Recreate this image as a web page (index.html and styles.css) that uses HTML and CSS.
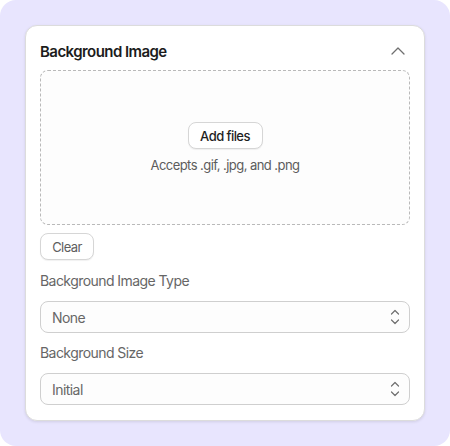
FILE: index.html
```html
<!DOCTYPE html>
<html>
<head>
<meta charset="utf-8">
<link rel="stylesheet" href="styles.css">
</head>
<body>
<div class="frame">
  <section class="card">
    <header class="card-head">
      <h2 class="card-title">Background Image</h2>
      <svg class="collapse" width="14" height="8" viewBox="0 0 14 8" fill="none"><path d="M1 7 L7 1 L13 7" stroke="#6f6f6f" stroke-width="1.3" stroke-linecap="round" stroke-linejoin="round"/></svg>
    </header>
    <div class="dropzone">
      <button class="btn btn-primary">Add files</button>
      <p class="hint">Accepts .gif, .jpg, and .png</p>
    </div>
    <div class="clear-row"><button class="btn btn-clear">Clear</button></div>
    <div class="field">
      <label class="field-label">Background Image Type</label>
      <div class="select">
        <span class="select-value">None</span>
        <svg class="updown" width="10" height="18" viewBox="0 0 10 18" fill="none"><path d="M1.5 6 L5 2.5 L8.5 6 M1.5 12 L5 15.5 L8.5 12" stroke="#6f6f6f" stroke-width="1.2" stroke-linecap="round" stroke-linejoin="round"/></svg>
      </div>
    </div>
    <div class="field">
      <label class="field-label">Background Size</label>
      <div class="select">
        <span class="select-value">Initial</span>
        <svg class="updown" width="10" height="18" viewBox="0 0 10 18" fill="none"><path d="M1.5 6 L5 2.5 L8.5 6 M1.5 12 L5 15.5 L8.5 12" stroke="#6f6f6f" stroke-width="1.2" stroke-linecap="round" stroke-linejoin="round"/></svg>
      </div>
    </div>
  </section>
</div>
</body>
</html>
```
FILE: styles.css
```css
* { box-sizing: border-box; }
html, body { margin: 0; padding: 0; background: #ffffff; }
body { font-family: Inter, "Noto Sans", sans-serif; letter-spacing: -0.035em; }
.frame {
  width: 450px;
  height: 446px;
  background: #e8e5fe;
  border-radius: 16px;
  padding: 25px;
}
.card {
  width: 400px;
  height: 396px;
  background: #ffffff;
  border: 1px solid #dcdcdc;
  border-radius: 12px;
  box-shadow: 0 1px 3px rgba(0,0,0,0.10);
  padding: 14px 14px 15px;
  display: flex;
  flex-direction: column;
}
.card-head {
  display: flex;
  align-items: center;
  justify-content: space-between;
  height: 22px;
  margin-bottom: 8px;
}
.card-title {
  margin: 0;
  font-size: 15px;
  font-weight: 600;
  color: #1c1c1c;
}
.collapse { margin-right: 5px; }
.dropzone {
  height: 155px;
  border: 1px dashed #b9b9b9;
  border-radius: 8px;
  background: #fdfdfd;
  display: flex;
  flex-direction: column;
  align-items: center;
  padding-top: 51px;
}
.btn {
  font-family: inherit;
  letter-spacing: inherit;
  font-size: 13px;
  background: #ffffff;
  border: 1px solid #d6d6d6;
  border-radius: 8px;
  height: 27px;
  box-shadow: 0 1px 1px rgba(0,0,0,0.06);
  cursor: pointer;
}
.btn-primary {
  width: 75px;
  font-weight: 500;
  color: #1f1f1f;
}
.hint {
  margin: 7px 0 0;
  font-size: 13px;
  color: #5c5c5c;
  line-height: 18px;
}
.clear-row { margin-top: 8px; }
.btn-clear {
  width: 54px;
  color: #5e5e5e;
  padding: 0;
}
.field {
  display: flex;
  flex-direction: column;
  margin-top: 11px;
}
.field + .field { margin-top: 10px; }
.field-label {
  font-size: 14px;
  line-height: 20px;
  color: #666666;
  margin-bottom: 10px;
}
.select {
  height: 32px;
  border: 1px solid #cfcfcf;
  border-radius: 8px;
  background: #fdfdfd;
  display: flex;
  align-items: center;
  justify-content: space-between;
  padding: 0 9px 0 11px;
}
.select-value {
  font-size: 14px;
  color: #676767;
}
```
